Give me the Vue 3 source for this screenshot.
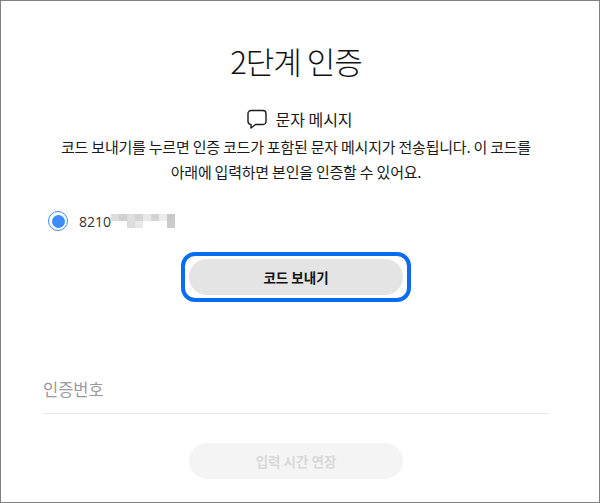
<script setup>
// mosaic cells hiding the phone number: shade per cell, two rows
const mosaicTop = ['#dcdcdc', '#d0d0d0', '#dedede', '#d4d4d4', '#e8e8e8', '#d4d4d4', '#ececec', '#c8c8c8']
const mosaicBottom = ['#ffffff', '#ffffff', '#dcdcdc', '#e8e8e8', '#ffffff', '#ffffff', '#ffffff', '#cccccc']
</script>

<template>
  <div class="page">
    <h1 class="title">2단계 인증</h1>

    <div class="method">
      <svg class="method__icon" width="20" height="20" viewBox="0 0 20 20" fill="none">
        <path d="M4 1.500h12a3 3 0 0 1 3 3v8a3 3 0 0 1-3 3H8.500L4 19v-3.600a3 3 0 0 1-3-2.900v-8a3 3 0 0 1 3-3z" stroke="#1a1a1a" stroke-width="1.400" stroke-linejoin="round" />
      </svg>
      <span>문자 메시지</span>
    </div>

    <p class="desc">
      코드 보내기를 누르면 인증 코드가 포함된 문자 메시지가 전송됩니다. 이 코드를<br />
      아래에 입력하면 본인을 인증할 수 있어요.
    </p>

    <label class="phone">
      <span class="radio"><span class="radio__dot"></span></span>
      <span class="phone__num">8210</span>
      <span class="mosaic">
        <span class="mosaic__row">
          <i v-for="(c, i) in mosaicTop" :key="i" :style="{ background: c }"></i>
        </span>
        <span class="mosaic__row">
          <i v-for="(c, i) in mosaicBottom" :key="i" :style="{ background: c }"></i>
        </span>
      </span>
    </label>

    <div class="send">
      <button class="btn btn--send" type="button">코드 보내기</button>
    </div>

    <div class="field">인증번호</div>

    <button class="btn btn--extend" type="button" disabled>입력 시간 연장</button>
  </div>
</template>

<style scoped>
.page {
  box-sizing: border-box;
  width: 600px;
  height: 503px;
  border: 1px solid #808080;
  padding-right: 8px;
  display: flex;
  flex-direction: column;
  align-items: center;
  background: #fff;
  color: #1a1a1a;
  font-family: "Noto Sans CJK KR", "Noto Sans", sans-serif;
  overflow: hidden;
}

.title {
  margin: 37px 0 0;
  font-size: 31px;
  line-height: 46px;
  font-weight: 300;
  letter-spacing: -1px;
  color: #111;
}

.method {
  margin: 23px 0 0 8px;
  display: flex;
  align-items: center;
  gap: 8px;
  font-size: 16px;
  line-height: 24px;
}

.desc {
  margin: 3px 0 0;
  font-size: 15px;
  line-height: 25px;
  letter-spacing: -0.22px;
  text-align: center;
}

.phone {
  align-self: flex-start;
  margin: 25px 0 0 47px;
  display: flex;
  align-items: center;
  height: 24px;
}

.radio {
  box-sizing: border-box;
  width: 20px;
  height: 20px;
  border: 1.500px solid #3d8bfd;
  border-radius: 50%;
  display: flex;
  align-items: center;
  justify-content: center;
}

.radio__dot {
  width: 13px;
  height: 13px;
  border-radius: 50%;
  background: #3d8bfd;
}

.phone__num {
  margin-left: 11px;
  font-family: "Open Sans", sans-serif;
  font-size: 14px;
  color: #333;
}

.mosaic {
  display: flex;
  flex-direction: column;
}

.mosaic__row {
  display: flex;
}

.mosaic__row i {
  width: 8px;
  height: 7px;
}

.send {
  margin-top: 19px;
  padding: 3px 4px;
  border: 4px solid #0a6cf0;
  border-radius: 14px;
  display: flex;
}

.btn {
  border: 0;
  border-radius: 18px;
  font-family: inherit;
  font-size: 13.500px;
  font-weight: 700;
  width: 214px;
  height: 36px;
  padding: 0;
}

.btn--send {
  background: #e4e4e4;
  color: #111;
}

.btn--extend {
  margin-top: 29px;
  background: #f4f4f4;
  color: #d8d8d8;
}

.field {
  box-sizing: border-box;
  align-self: flex-start;
  margin: 70px 0 0 42px;
  width: 506px;
  height: 42px;
  padding-top: 4px;
  border-bottom: 1px solid #eaeaea;
  font-size: 16.500px;
  line-height: 26px;
  color: #9a9a9a;
}
</style>
